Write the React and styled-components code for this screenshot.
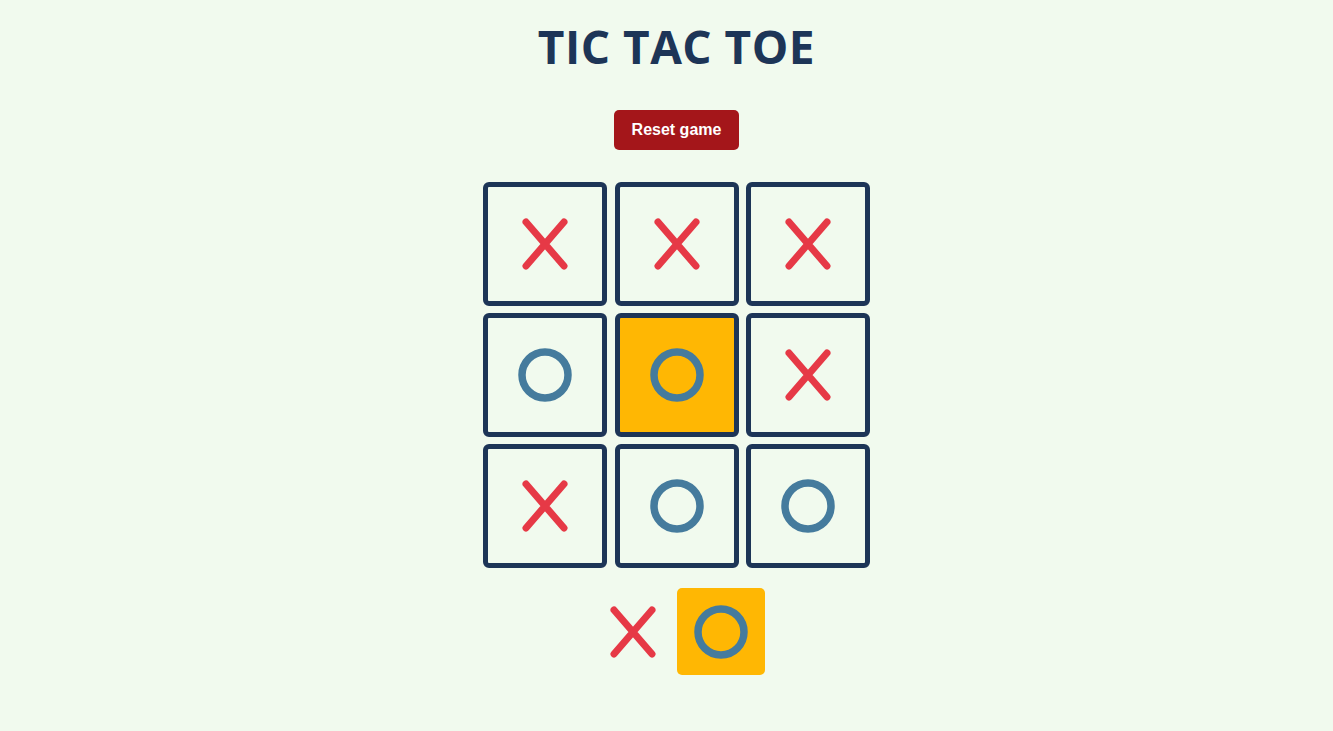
import React from "react";
import styled, { createGlobalStyle } from "styled-components";

const GlobalStyle = createGlobalStyle`
  html, body {
    margin: 0;
    padding: 0;
    background: #f1faee;
  }
  body {
    font-family: "Open Sans", "Liberation Sans", sans-serif;
  }
`;

const board = ["x", "x", "x", "o", "o", "x", "x", "o", "o"];
const winning = [4];

const Page = styled.main`
  display: flex;
  flex-direction: column;
  align-items: center;
  padding: 0 0 40px 20px;
  min-height: 731px;
  box-sizing: border-box;
`;

const Title = styled.h1`
  margin: 14px 0 0;
  font-family: "Open Sans", "Liberation Sans", sans-serif;
  font-weight: 700;
  font-size: 46px;
  line-height: 64px;
  color: #1d3557;
  letter-spacing: 0.5px;
`;

const ResetButton = styled.button`
  margin-top: 32px;
  height: 40px;
  padding: 0 18px;
  border: none;
  border-radius: 5px;
  background: #a4161a;
  color: #ffffff;
  font-family: "Liberation Sans", Arial, sans-serif;
  font-weight: 700;
  font-size: 16px;
  cursor: pointer;
`;

const Board = styled.div`
  margin-top: 32px;
  display: grid;
  grid-template-columns: repeat(3, 124px);
  grid-auto-rows: 124px;
  row-gap: 7px;
  column-gap: 7.5px;
`;

const Cell = styled.button`
  display: flex;
  align-items: center;
  justify-content: center;
  padding: 0;
  border: 5px solid #1d3557;
  border-radius: 6px;
  background: ${(p) => (p.$highlight ? "#ffb703" : "transparent")};
  cursor: pointer;
`;

const Turns = styled.div`
  margin-top: 20px;
  display: flex;
`;

const TurnBox = styled.div`
  width: 88px;
  height: 87px;
  display: flex;
  align-items: center;
  justify-content: center;
  border-radius: 5px;
  background: ${(p) => (p.$active ? "#ffb703" : "transparent")};
`;

const XMark = () => (
  <svg width="46" height="52" viewBox="0 0 46 52">
    <path
      d="M4 4 L42 48 M42 4 L4 48"
      stroke="#e63946"
      strokeWidth="7"
      strokeLinecap="round"
      fill="none"
    />
  </svg>
);

const OMark = () => (
  <svg width="54" height="54" viewBox="0 0 54 54">
    <circle cx="27" cy="27" r="23" stroke="#457b9d" strokeWidth="7.5" fill="none" />
  </svg>
);

const Mark = ({ value }) => (value === "x" ? <XMark /> : value === "o" ? <OMark /> : null);

export default function App() {
  return (
    <>
      <GlobalStyle />
      <Page>
        <Title>TIC TAC TOE</Title>
        <ResetButton>Reset game</ResetButton>
        <Board>
          {board.map((v, i) => (
            <Cell key={i} $highlight={winning.includes(i)}>
              <Mark value={v} />
            </Cell>
          ))}
        </Board>
        <Turns>
          <TurnBox>
            <XMark />
          </TurnBox>
          <TurnBox $active>
            <OMark />
          </TurnBox>
        </Turns>
      </Page>
    </>
  );
}
